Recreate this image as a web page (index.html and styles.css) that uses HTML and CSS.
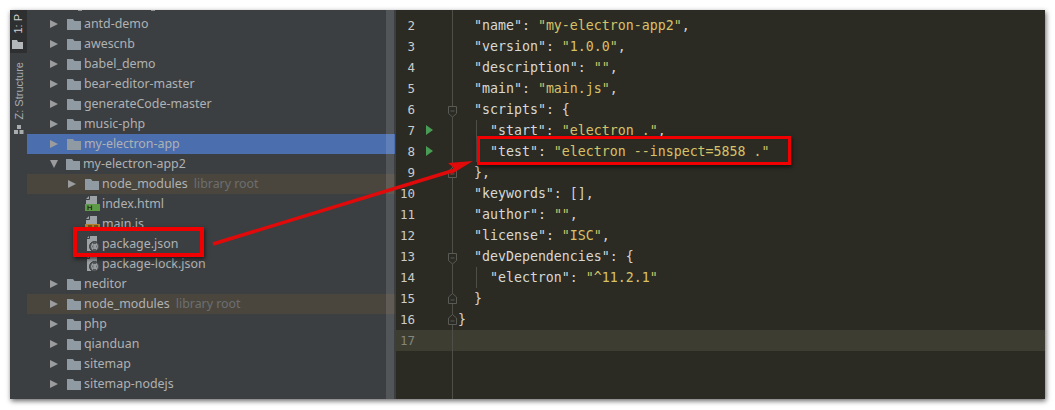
FILE: index.html
```html
<!DOCTYPE html>
<html lang="en">
<head>
<meta charset="utf-8">
<title>package.json</title>
<link rel="stylesheet" href="styles.css">
</head>
<body>
<svg class="defs" width="0" height="0">
  <defs>
    <symbol id="folder" viewBox="0 0 14 11"><path d="M0 0h6l1.500 2H14v9H0z" fill="#8f9aa3"/></symbol>
    <symbol id="fold-down" viewBox="0 0 10 12"><path d="M.5 .5h8v7l-4 3.500l-4-3.500z" fill="#2b2b24" stroke="#5a5a54"/><path d="M2.500 5h4" stroke="#5a5a54"/></symbol>
    <symbol id="fold-up" viewBox="0 0 10 12"><path d="M.5 10.500h8v-6.500l-4-3.500l-4 3.500z" fill="#2b2b24" stroke="#5a5a54"/><path d="M2.500 7h4" stroke="#5a5a54"/></symbol>
    <symbol id="json-file" viewBox="0 0 16 16"><path d="M4 0h8v7H9v8H2V2z" fill="#9da2a6"/><path d="M4.500 0v2.500H2" stroke="#3c3f41" fill="none"/><circle cx="9.500" cy="10.500" r="5" fill="#55585a" stroke="#3c3f41"/><path d="M7.500 7.500q-1.500 3 0 6M11.500 7.500q1.500 3 0 6M9 8v5M10.200 8v5" stroke="#c4c7c9" fill="none" stroke-width=".9"/></symbol>
  </defs>
</svg>
<main class="window">
  <nav class="strip">
    <div class="strip-active">
      <span class="strip-label strip-project">1: P</span>
      <svg class="strip-folder" width="11" height="9" viewBox="0 0 11 9"><path d="M0 0h5l1 2h5v7H0z" fill="#b4b8bb"/></svg>
    </div>
    <div class="strip-rest">
      <span class="strip-label">Z: Structure</span>
      <svg class="strip-struct" width="10" height="9" viewBox="0 0 10 9"><path d="M3 0h4v4H3zM0 5h4v4H0zM5.500 5h4v4h-4z" fill="#a8acae"/></svg>
    </div>
  </nav>

  <section class="tree">
    <div class="row row-cut"><i class="speck"></i><i class="speck speck-far"></i></div>
    <div class="row"><i class="arrow"></i><svg class="folder"><use href="#folder"/></svg><span class="name">antd-demo</span></div>
    <div class="row"><i class="arrow"></i><svg class="folder"><use href="#folder"/></svg><span class="name">awescnb</span></div>
    <div class="row"><i class="arrow"></i><svg class="folder"><use href="#folder"/></svg><span class="name">babel_demo</span></div>
    <div class="row"><i class="arrow"></i><svg class="folder"><use href="#folder"/></svg><span class="name">bear-editor-master</span></div>
    <div class="row"><i class="arrow"></i><svg class="folder"><use href="#folder"/></svg><span class="name">generateCode-master</span></div>
    <div class="row"><i class="arrow"></i><svg class="folder"><use href="#folder"/></svg><span class="name">music-php</span></div>
    <div class="row row-selected"><i class="arrow"></i><svg class="folder"><use href="#folder"/></svg><span class="name">my-electron-app</span></div>
    <div class="row"><i class="arrow arrow-open"></i><svg class="folder"><use href="#folder"/></svg><span class="name">my-electron-app2</span></div>
    <div class="row row-lib depth-1"><i class="arrow"></i><svg class="folder"><use href="#folder"/></svg><span class="name">node_modules</span><span class="hint">library root</span></div>
    <div class="row depth-2">
      <svg class="file" width="16" height="16" viewBox="0 0 16 16"><path d="M4 0h8v8H1V3z" fill="#9da2a6"/><path d="M4.500 0v3.500H1" stroke="#3c3f41" fill="none"/><path d="M0 8h15v7H0z" fill="#5d9b47"/><path d="M3 9.500v4.500M6.500 9.500v4.500M3 11.500h3.500" stroke="#27361f" stroke-width="1.200" fill="none"/></svg>
      <span class="name">index.html</span></div>
    <div class="row depth-2">
      <svg class="file" width="16" height="16" viewBox="0 0 16 16"><path d="M4 0h8v8H1V3z" fill="#9da2a6"/><path d="M4.500 0v3.500H1" stroke="#3c3f41" fill="none"/><path d="M0 8h15v7H0z" fill="#b5802a"/><path d="M3 10h4M9 10h4" stroke="#5e451a" stroke-width="1.500"/></svg>
      <span class="name">main.js</span></div>
    <div class="row depth-2"><svg class="file"><use href="#json-file"/></svg><span class="name">package.json</span></div>
    <div class="row depth-2"><svg class="file"><use href="#json-file"/></svg><span class="name">package-lock.json</span></div>
    <div class="row"><i class="arrow"></i><svg class="folder"><use href="#folder"/></svg><span class="name">neditor</span></div>
    <div class="row row-lib"><i class="arrow"></i><svg class="folder"><use href="#folder"/></svg><span class="name">node_modules</span><span class="hint">library root</span></div>
    <div class="row"><i class="arrow"></i><svg class="folder"><use href="#folder"/></svg><span class="name">php</span></div>
    <div class="row"><i class="arrow"></i><svg class="folder"><use href="#folder"/></svg><span class="name">qianduan</span></div>
    <div class="row"><i class="arrow"></i><svg class="folder"><use href="#folder"/></svg><span class="name">sitemap</span></div>
    <div class="row"><i class="arrow"></i><svg class="folder"><use href="#folder"/></svg><span class="name">sitemap-nodejs</span></div>
    <div class="row"><i class="arrow"></i><svg class="folder"><use href="#folder"/></svg></div>
  </section>

  <div class="scrollbar"></div>

  <section class="editor">
    <div class="fold-line"></div>
    <div class="line"><span class="num">2</span><span class="run"></span><span class="fold"></span><code class="code">  <b>"name"</b>: <em>"my-electron-app2"</em>,</code></div>
    <div class="line"><span class="num">3</span><span class="run"></span><span class="fold"></span><code class="code">  <b>"version"</b>: <em>"1.0.0"</em>,</code></div>
    <div class="line"><span class="num">4</span><span class="run"></span><span class="fold"></span><code class="code">  <b>"description"</b>: <em>""</em>,</code></div>
    <div class="line"><span class="num">5</span><span class="run"></span><span class="fold"></span><code class="code">  <b>"main"</b>: <em>"main.js"</em>,</code></div>
    <div class="line"><span class="num">6</span><span class="run"></span><span class="fold"><svg class="fold-icon fold-icon-open"><use href="#fold-down"/></svg></span><code class="code">  <b>"scripts"</b>: {</code></div>
    <div class="line"><span class="num">7</span><span class="run run-on"></span><span class="fold"></span><code class="code indented">    <b>"start"</b>: <em>"electron ."</em>,</code></div>
    <div class="line"><span class="num">8</span><span class="run run-on"></span><span class="fold"></span><code class="code indented">    <b>"test"</b>: <em>"electron --inspect=5858 ."</em></code></div>
    <div class="line"><span class="num">9</span><span class="run"></span><span class="fold"><svg class="fold-icon"><use href="#fold-up"/></svg></span><code class="code">  },</code></div>
    <div class="line"><span class="num">10</span><span class="run"></span><span class="fold"></span><code class="code">  <b>"keywords"</b>: [],</code></div>
    <div class="line"><span class="num">11</span><span class="run"></span><span class="fold"></span><code class="code">  <b>"author"</b>: <em>""</em>,</code></div>
    <div class="line"><span class="num">12</span><span class="run"></span><span class="fold"></span><code class="code">  <b>"license"</b>: <em>"ISC"</em>,</code></div>
    <div class="line"><span class="num">13</span><span class="run"></span><span class="fold"><svg class="fold-icon fold-icon-open"><use href="#fold-down"/></svg></span><code class="code">  <b>"devDependencies"</b>: {</code></div>
    <div class="line"><span class="num">14</span><span class="run"></span><span class="fold"></span><code class="code indented">    <b>"electron"</b>: <em>"^11.2.1"</em></code></div>
    <div class="line"><span class="num">15</span><span class="run"></span><span class="fold"><svg class="fold-icon"><use href="#fold-up"/></svg></span><code class="code">  }</code></div>
    <div class="line"><span class="num">16</span><span class="run"></span><span class="fold"><svg class="fold-icon"><use href="#fold-up"/></svg></span><code class="code">}</code></div>
    <div class="line line-current"><span class="num">17</span><span class="run"></span><span class="fold"></span><code class="code"></code></div>
  </section>

  <div class="mark mark-file"></div>
  <div class="mark mark-test"></div>
  <svg class="pointer" width="1055" height="410" viewBox="0 0 1055 410">
    <path d="M213 244L455 170" stroke="#e00a0a" stroke-width="3.500" fill="none"/>
    <path d="M473 161L448 163L454 168L450 175z" fill="#e00a0a"/>
  </svg>
</main>
</body>
</html>
```
FILE: styles.css
```css
* { box-sizing: border-box; }
html, body { margin: 0; height: 100%; background: #fff; overflow: hidden; }
body { padding: 10px 10px 11px 10px; }
.defs { position: absolute; }
.window {
  display: flex;
  height: 389px;
  background: #3c3f41;
  box-shadow: 1px 2px 5px rgba(0,0,0,.6);
  overflow: hidden;
}
.strip { width: 17px; flex: none; background: #3c3f41; display: flex; flex-direction: column; }
.strip-active { height: 43px; background: #2d2f30; display: flex; flex-direction: column; justify-content: flex-end; align-items: center; padding: 0 2px 4px 0; gap: 6px; overflow: hidden; }
.strip-rest { display: flex; flex-direction: column; align-items: center; padding: 9px 0 0; gap: 6px; }
.strip-label { writing-mode: vertical-rl; transform: rotate(180deg); font: 11px/14px "Liberation Sans", sans-serif; color: #a9adaf; white-space: nowrap; }
.strip-project { color: #d0d2d3; }
.strip-folder, .strip-struct { flex: none; }
.tree { width: 368px; flex: none; overflow: hidden; font: 12.400px/20px "Noto Sans", sans-serif; color: #afb1b3; }
.row { height: 20px; display: flex; align-items: center; padding-left: 23px; white-space: nowrap; }
.row-cut { height: 4px; overflow: hidden; align-items: flex-start; padding-left: 51px; }
.speck { width: 4px; height: 1px; background: #8f9092; flex: none; }
.speck-far { margin-left: 69px; }
.row-selected { background: #4b6eaf; }
.row-lib { background: #4a463e; }
.depth-1 { padding-left: 41px; }
.depth-2 { padding-left: 58px; }
.arrow { width: 0; height: 0; flex: none; border-left: 8px solid #9a9c9e; border-top: 4.500px solid transparent; border-bottom: 4.500px solid transparent; margin-right: 9px; }
.arrow-open { border-left: 4.500px solid transparent; border-right: 4.500px solid transparent; border-top: 8px solid #9a9c9e; border-bottom: 0; margin-right: 8px; }
.folder { width: 14px; height: 11px; flex: none; margin-right: 3px; }
.file { width: 16px; height: 16px; flex: none; margin-right: 1px; }
.hint { color: #6c6e70; margin-left: 6px; }
.scrollbar { position: absolute; left: 386px; top: 10px; width: 8px; height: 389px; background: rgba(255,255,255,.12); }
.editor { flex: 1; position: relative; margin-left: 1px; background: #2b2b24; padding-top: 5px; font: 13.280px/21px "DejaVu Sans Mono", monospace; color: #d4d4d4; overflow: hidden; }
.line { height: 21px; display: flex; }
.line-current { background: #3e3d32; }
.num { width: 19px; flex: none; text-align: right; color: #c9cbcc; font-size: 12.500px; }
.line-current .num { color: #83857e; }
.run { width: 27px; flex: none; position: relative; }
.run-on::after { content: ""; position: absolute; left: 11px; top: 5px; border-left: 7px solid #499c54; border-top: 5px solid transparent; border-bottom: 5px solid transparent; }
.fold { width: 16px; flex: none; position: relative; }
.fold-icon { position: absolute; left: 6px; top: 5px; width: 10px; height: 12px; }
.fold-icon-open { top: 7px; }
.fold-line { position: absolute; left: 56px; top: 0; bottom: 0; width: 1px; background: #4f4f49; }
.code { white-space: pre; font: inherit; position: relative; }
.indented::before { content: ""; position: absolute; left: 18px; top: 0; bottom: 0; width: 1px; background: #4f4f49; }
.code b { font-weight: normal; color: #d8d8d4; }
.code em { font-style: normal; color: #d8c268; }
.mark { position: absolute; border: 3px solid #f00000; box-shadow: 1px 2px 4px rgba(0,0,0,.6); }
.mark-file { left: 73px; top: 227px; width: 131px; height: 30px; border-width: 4px; }
.mark-test { left: 477px; top: 136px; width: 314px; height: 29px; }
.pointer { position: absolute; left: 0; top: 0; pointer-events: none; }
```
